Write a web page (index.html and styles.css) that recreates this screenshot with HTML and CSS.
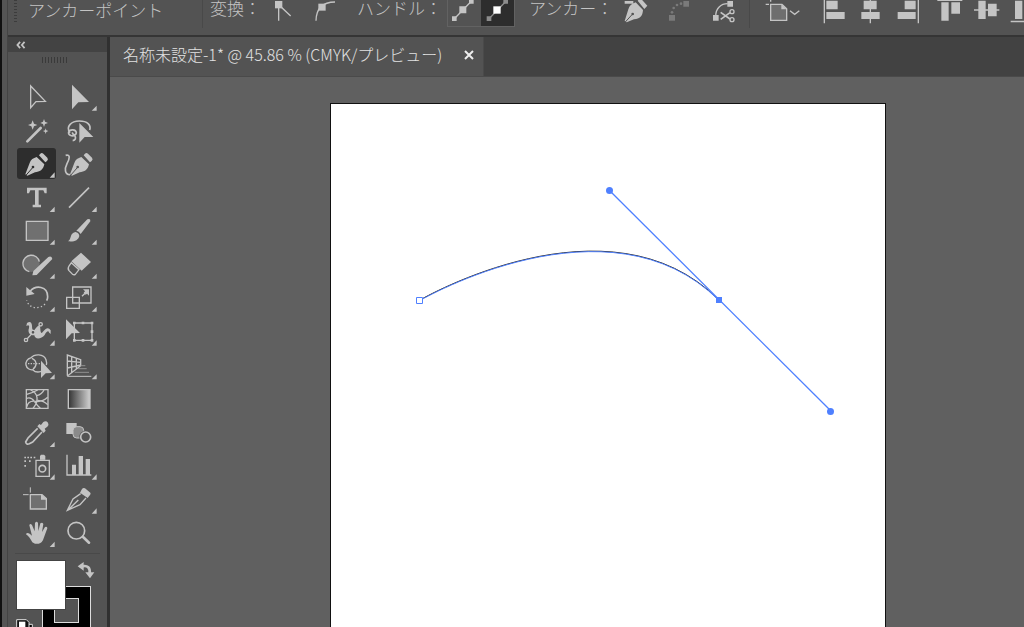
FILE: index.html
```html
<!DOCTYPE html>
<html lang="ja">
<head>
<meta charset="utf-8">
<title>名称未設定-1</title>
<link rel="stylesheet" href="styles.css">
</head>
<body>
<div class="app">
<div class="workspace">
  <header class="control-bar">
    <span class="bar-grip"></span>
    <span class="label mode">アンカーポイント</span>
    <span class="divider"></span>
    <span class="label convert">変換：</span>
    <div class="group">
      <button class="ctl" aria-label="コーナーに変換"><svg viewBox="45 0 72 105"><path class="s w4" d="M59 62V14L95 48"/><path class="f" d="M48 3h22v22H48z"/></svg></button>
      <button class="ctl" aria-label="スムーズに変換"><svg viewBox="165 0 72 105"><path class="s w4" d="M171 62C172 25 190 6 228 6"/><path class="f" d="M178 11h22v21h-22z"/></svg></button>
    </div>
    <span class="label handle">ハンドル：</span>
    <div class="segmented">
      <button class="seg" aria-label="ハンドルを表示"><svg viewBox="564 0 102 78"><path class="s w4" d="M583 56L634 4"/><path class="f" d="M576 49h14v14h-14zM598 19h21v21h-21zM627 -3h14v14h-14z"/></svg></button>
      <button class="seg on" aria-label="ハンドルを隠す"><svg viewBox="666 0 102 78"><path class="s w4 dim" d="M690 56L741 4"/><path class="fdim" d="M683 49h14v14h-14zM733 -3h14v14h-14z"/><path class="white" d="M703 19h22v22h-22z"/></svg></button>
    </div>
    <span class="label anchor">アンカー：</span>
    <div class="group">
      <button class="ctl" aria-label="アンカーを削除"><svg viewBox="342 0 72 105"><path class="f" d="M344 3h26v8h-26zM383 2L391 -6L412 17L403 27ZM377 7L399 30C398 48 390 56 372 58L350 67L344 63L355 28C358 17 366 11 377 7Z"/><path class="slit" d="M345 67L366 44"/><circle class="hole" cx="368" cy="42" r="4"/></svg></button>
      <button class="ctl" aria-label="アンカーを連結" disabled><svg viewBox="474 0 72 105"><path fill="#7a7a7a" d="M477 45h18v17h-18zM520 3h17v17h-17z"/><g fill="#7a7a7a"><circle cx="486" cy="37" r="4"/><circle cx="491" cy="24" r="4"/><circle cx="501" cy="15" r="4"/><circle cx="513" cy="11" r="4"/></g></svg></button>
      <button class="ctl" aria-label="パスをカット"><svg viewBox="606 0 72 105"><path class="s w4" d="M617 47C618 25 632 11 653 11"/><path class="f" d="M609 45h17v17h-17zM652 3h17v17h-17z"/><path class="s w5" d="M632 37L660 57M632 58L660 38"/><circle class="s w4" cx="666" cy="35" r="6"/><circle class="s w4" cx="666" cy="59" r="6"/></svg></button>
    </div>
    <span class="divider second"></span>
    <button class="ctl artboard-menu" aria-label="アートボード"><svg viewBox="15 0 108 105"><path d="M32 13H66L80 26V61H32Z" fill="#6e6e6e" stroke="#c4c4c4" stroke-width="4"/><path class="f" d="M64 12L80 28H64Z"/><path class="s w4" d="M17 13h10M32 -2v7M90 32L104 43L118 32"/></svg></button>
    <div class="group aligns">
      <button class="ctl" aria-label="左揃え"><svg viewBox="190 0 78 105"><path class="f" d="M192 0h4v70h-4zM200 2h34v26h-34zM200 36h55v21h-55z"/></svg></button>
      <button class="ctl" aria-label="左右中央揃え"><svg viewBox="301 0 78 105"><path class="f" d="M330 0h4v70h-4zM312 2h39v26h-39zM305 36h55v21h-55z"/></svg></button>
      <button class="ctl" aria-label="右揃え"><svg viewBox="412 0 78 105"><path class="f" d="M474 0h4v70h-4zM435 2h33v26h-33zM414 36h54v21h-54z"/></svg></button>
      <button class="ctl top" aria-label="上揃え"><svg viewBox="533 0 78 105"><path class="f" d="M534 -2h75v5h-75zM546 7h22v55h-22zM576 7h26v34h-26z"/></svg></button>
      <button class="ctl" aria-label="上下中央揃え"><svg viewBox="643 0 78 105"><path class="f" d="M643 28h76v4h-76zM656 2h22v55h-22zM685 11h26v38h-26z"/></svg></button>
      <button class="ctl" aria-label="下揃え"><svg viewBox="754 0 78 105"><path class="f" d="M753 62h75v5h-75zM766 2h22v55h-22zM795 20h26v37h-26z"/></svg></button>
    </div>
  </header>

  <aside class="tool-panel">
    <button class="collapse" aria-label="パネルを折りたたむ"><svg viewBox="0 0 12 9"><path class="s" stroke-width="2" d="M5 1L2 4.500L5 8M10 1L7 4.500L10 8"/></svg></button>
    <div class="panel-grip"></div>
    <div class="tools">
      <button class="tool" aria-label="ダイレクト選択"><svg viewBox="51 3 117 93"><path class="s w4" d="M92 18V83L108 65L136 64Z"/></svg></button>
      <button class="tool" aria-label="選択"><svg viewBox="177 3 117 93"><path class="f" d="M216 14V88L235 67L267 66ZM290 77V92H275Z"/></svg></button>
      <button class="tool" aria-label="自動選択"><svg viewBox="51 104 117 93"><path class="s w8 round" d="M82 183L122 143"/><path class="f" d="M98 120l4 10 10 4-10 4-4 10-4-10-10-4 10-4zM132 116l3 8 9 4-9 3-3 9-3-9-8-3 8-4zM137 144l2 6 6 2-6 3-2 6-2-6-6-3 6-2z"/></svg></button>
      <button class="tool" aria-label="なげなわ"><svg viewBox="177 104 117 93"><path class="s w5" d="M210 157C196 139 214 122 238 122C262 122 274 134 269 149M226 165C214 170 204 163 206 155C210 145 228 147 229 157C228 168 215 162 218 156M223 164C230 173 226 180 218 181"/><path class="f" d="M238 128V187L254 170L280 170Z"/></svg></button>
      <button class="tool active" aria-label="ペン" aria-pressed="true"><svg viewBox="51 204 117 93"><g id="nib"><path class="f" d="M117 226L121 221Q125 217 130 221L142 233Q146 238 141 243L136 247ZM110 231L133 253C130 269 119 276 105 277L82 287L76 283L89 249C92 239 100 234 110 231Z"/></g><path class="slit on-active" d="M77 287L97 264"/><circle class="hole on-active" cx="99" cy="261" r="4"/><path class="f" d="M164 277V293H149Z"/></svg></button>
      <button class="tool" aria-label="曲線"><svg viewBox="177 204 117 93"><use href="#nib" x="134"/><path class="slit" d="M211 287L231 264"/><circle class="hole" cx="233" cy="261" r="4"/><path class="s w5" d="M197 226C212 222 209 236 201 251C193 267 194 284 210 284"/></svg></button>
      <button class="tool" aria-label="文字"><svg viewBox="51 5 117 93"><path class="f" d="M81 22h59v17h-6l-4-9H116v43h7v8H98v-8h7V30H91l-4 9h-6zM164 79V95H149Z"/></svg></button>
      <button class="tool" aria-label="直線"><svg viewBox="177 5 117 93"><path class="s w5" d="M207 82L267 22"/><path class="f" d="M290 79V95H275Z"/></svg></button>
      <button class="tool" aria-label="長方形"><svg viewBox="51 106 117 93"><path fill="#707070" stroke="#c4c4c4" stroke-width="4" d="M79 125h65v57H79z"/><path class="f" d="M164 180V195H149Z"/></svg></button>
      <button class="tool" aria-label="ブラシ"><svg viewBox="177 106 117 93"><path class="f" d="M229 153L262 119Q272 115 271 125L242 163Q237 154 229 153ZM226 157Q237 159 238 169C235 182 223 187 204 185C216 177 208 161 226 157ZM290 180V195H275Z"/></svg></button>
      <button class="tool" aria-label="Shaper"><svg viewBox="51 207 117 93"><circle cx="94" cy="251" r="25" fill="#707070"/><path class="s w4" d="M88 275A25 25 0 1 1 118 245"/><path stroke="#535353" stroke-width="17" d="M98 288L152 234"/><path class="f" d="M97 286L100 273L145 231Q155 227 157 237L110 285ZM164 281V296H149Z"/></svg></button>
      <button class="tool" aria-label="消しゴム"><svg viewBox="177 207 117 93"><path class="f" d="M243 218L273 246L245 272L214 244ZM290 281V296H275Z"/><path class="s w4" d="M214 248L237 269L226 283Q220 287 215 280L207 272Q202 266 207 258Z"/></svg></button>
      <button class="tool" aria-label="回転"><svg viewBox="51 7 117 93"><path class="s w5" d="M91 34C107 16 143 18 143 51Q143 57 140 63"/><path class="s w4" stroke-dasharray="4 7" d="M135 73C116 92 86 85 80 62"/><path class="f" d="M79 22V48L104 43ZM164 81V96H149Z"/></svg></button>
      <button class="tool" aria-label="拡大・縮小"><svg viewBox="177 7 117 93"><path class="s w4" d="M218 22h55v48h-55zM200 53h38v33h-38zM246 50L262 34"/><path class="f" d="M249 29h18v19l-6-6-4 3-6-6 4-4zM290 81V96H275Z"/></svg></button>
      <button class="tool" aria-label="線幅"><svg viewBox="51 108 117 93"><path class="f" d="M81 129Q94 120 96 137Q96 154 104 150Q121 126 121 148Q122 164 128 156Q143 136 152 151V162Q147 159 145 154Q140 153 134 165C124 178 104 179 103 166C90 167 82 158 87 144Q90 132 79 138Z"/><path class="s w4" d="M78 180L121 134"/><circle class="node" cx="78" cy="180" r="5"/><circle class="node" cx="99" cy="157" r="6"/><circle class="node" cx="122" cy="133" r="5"/><path class="f" d="M164 181V197H149Z"/></svg></button>
      <button class="tool" aria-label="自由変形"><svg viewBox="177 108 117 93"><path class="s w4" d="M223 129h53v52h-53z"/><path class="f" d="M198 118V178L215 160L240 159ZM219 125h8v8h-8zM245 125h8v8h-8zM272 125h8v8h-8zM272 151h8v8h-8zM272 177h8v8h-8zM245 177h8v8h-8zM219 177h8v8h-8zM290 181V197H275Z"/></svg></button>
      <button class="tool" aria-label="シェイプ形成"><svg viewBox="51 209 117 93"><path class="s w4" d="M92 233A17 17 0 1 0 99 268M92 233C103 220 131 219 138 238Q141 247 139 254M98 268Q109 279 123 273M96 234Q108 240 108 250T99 266"/><path class="s w4" stroke-dasharray="4 4" d="M84 250H120"/><path class="f" d="M123 241V293L137 279L156 278ZM164 282V297H149Z"/></svg></button>
      <button class="tool" aria-label="遠近グリッド"><svg viewBox="177 209 117 93"><path class="s w4" d="M202 286V224L242 238V256L202 287M215 229V276M229 234V266M202 242L242 246M202 263L242 254"/><path stroke="#909090" stroke-width="3" d="M242 256h14M234 265h26M224 276h43"/><path class="s w3" d="M202 288h72"/><path class="f" d="M290 282V297H275Z"/></svg></button>
      <button class="tool" aria-label="メッシュ"><svg viewBox="51 9 117 93"><path class="s w4" d="M79 29h65v56H79z"/><path class="s w4" d="M80 43Q101 37 113 30M80 81Q85 61 106 64T143 52M92 30Q109 37 111 53T99 85M80 55Q93 50 103 64T121 85M110 47Q126 43 132 30M113 61Q132 62 143 74"/></svg></button>
      <button class="tool" aria-label="グラデーション"><svg viewBox="177 9 117 93"><defs><linearGradient id="ramp"><stop offset="0" stop-color="#333"/><stop offset="1" stop-color="#d0d0d0"/></linearGradient></defs><path fill="url(#ramp)" stroke="#c4c4c4" stroke-width="4" d="M205 29h65v56h-65z"/></svg></button>
      <button class="tool" aria-label="スポイト"><svg viewBox="51 110 117 93"><path class="f" d="M112 138L118 131L123 134L130 125Q138 120 144 127Q148 134 142 139L134 145L137 151L131 158ZM164 185V200H149Z"/><path class="s w5" d="M113 144L84 173L77 185Q79 194 88 190L98 185L126 155"/></svg></button>
      <button class="tool" aria-label="ブレンド"><svg viewBox="177 110 117 93"><path class="f" d="M199 128h31v33h-31z"/><rect x="219" y="139" width="32" height="34" rx="11" fill="#8a8a8a" stroke="#c4c4c4" stroke-width="3"/><circle cx="257" cy="170" r="19" fill="#535353"/><circle cx="257" cy="170" r="15" fill="#535353" stroke="#c4c4c4" stroke-width="5"/></svg></button>
      <button class="tool" aria-label="シンボルスプレー"><svg viewBox="51 211 117 93"><path class="s w4" d="M108 242h40v48h-40zM120 237h15"/><circle class="s w5" cx="127" cy="267" r="10"/><path class="f" d="M120 229l3-4h9l4 4v11h-16zM73 231h5v5h-5zM82 231h5v5h-5zM91 231h5v5h-5zM101 231h5v5h-5zM73 242h5v5h-5zM87 242h5v5h-5zM73 256h5v5h-5zM164 284V300H149Z"/></svg></button>
      <button class="tool" aria-label="棒グラフ"><svg viewBox="177 211 117 93"><path class="s w4" d="M201 225V286H274"/><path class="f" d="M216 255h12v31h-12zM236 229h13v57h-13zM257 238h13v48h-13zM290 284V300H275Z"/></svg></button>
      <button class="tool" aria-label="アートボードツール"><svg viewBox="51 12 117 93"><path fill="#707070" stroke="#c4c4c4" stroke-width="4" d="M91 44H126L139 56V87H91Z"/><path class="f" d="M123 42L141 59H123Z"/><path class="s w3" d="M69 44h17M91 22v16"/></svg></button>
      <button class="tool" aria-label="スライス"><svg viewBox="177 12 117 93"><path class="f" d="M246 27Q250 22 255 25L271 38Q273 41 270 45L263 54L240 38ZM290 85V101H275Z"/><path class="s w4" d="M242 41L219 57L202 91L240 74L258 54M203 91L235 60"/></svg></button>
      <button class="tool" aria-label="手のひら"><svg viewBox="51 112 117 93"><path class="f" d="M97 188C91 177 86 170 78 164Q80 157 89 162L96 168L88 137Q90 130 96 136L104 155L105 130Q110 123 114 130L115 154L121 131Q127 126 130 133L126 157L135 142Q142 139 142 146L131 176Q127 191 116 192H105ZM164 186V202H149Z"/></svg></button>
      <button class="tool" aria-label="ズーム"><svg viewBox="177 112 117 93"><circle class="s w5" cx="229" cy="153" r="25"/><path class="s w8 round" d="M250 173L267 189"/></svg></button>
    </div>
    <div class="swatches">
      <button class="stroke-color" aria-label="線"><span></span></button>
      <button class="fill-color" aria-label="塗り"></button>
      <button class="swap" aria-label="塗りと線を入れ替え"><svg viewBox="231 240 54 54"><path class="s" stroke-width="8" d="M246 256C263 252 271 260 269 277"/><path class="f" d="M251 243V269L233 256ZM256 274H283L270 292Z"/></svg></button>
      <button class="defaults" aria-label="初期設定の塗りと線"><svg viewBox="45 411 60 60"><path d="M66 430H97V459H66Z" fill="#000" stroke="#ddd" stroke-width="3"/><path d="M50 416H79L87 424V450H50Z" fill="#111" stroke="#ddd" stroke-width="3"/><path class="white" d="M57 422H76V446H57Z"/></svg></button>
    </div>
  </aside>

  <main class="document">
    <div class="tabs">
      <div class="tab"><span class="tab-title">名称未設定-1* @ 45.86 % (CMYK/プレビュー)</span><button class="close" aria-label="閉じる"><svg viewBox="0 0 10 10"><path stroke="#eee" stroke-width="2" d="M1 1L9 9M9 1L1 9"/></svg></button></div>
    </div>
    <div class="canvas">
      <div class="artboard">
        <svg class="drawing" viewBox="331 104 520 330" width="520" height="330">
          <path d="M420 300C420 300 609 190 719 300" fill="none" stroke="#222"/>
          <path d="M420 300.500C420 300.500 609 190.500 719 300.500" fill="none" stroke="#4f80ff"/>
          <line class="direction" x1="609" y1="190" x2="831" y2="411"/>
          <circle cx="609.500" cy="190.500" r="3.500" fill="#4f80ff"/>
          <circle cx="830.500" cy="411.500" r="3.500" fill="#4f80ff"/>
          <path fill="#4f80ff" d="M716 297h6v6h-6z"/>
          <path fill="#fff" stroke="#4f80ff" d="M416.500 297.500h6v6h-6z"/>
        </svg>
      </div>
    </div>
  </main>
</div>
</div>
</body>
</html>
```

FILE: styles.css
```css
* { box-sizing: border-box; }
body {
  margin: 0;
  background: #606060;
  color: #c4c4c4;
  font-family: "Noto Sans CJK JP", sans-serif;
  font-size: 17px;
  font-weight: 300;
}
button {
  display: block;
  margin: 0;
  padding: 0;
  border: 0;
  background: none;
  color: inherit;
  font: inherit;
}
svg { display: block; overflow: visible; }
.s { fill: none; stroke: #c4c4c4; }
.w3 { stroke-width: 3; }
.w4 { stroke-width: 4; }
.w5 { stroke-width: 5; }
.w8 { stroke-width: 8; }
.dim { stroke: #8c8c8c; }
.round { stroke-linecap: round; }
.f { fill: #c4c4c4; }
.fdim { fill: #8c8c8c; }
.white { fill: #fff; }
.node { fill: #535353; stroke: #c4c4c4; stroke-width: 4; }
.slit { fill: none; stroke: #535353; stroke-width: 3; }
.hole { fill: #535353; }
.slit.on-active { stroke: #2d2d2d; }
.hole.on-active { fill: #2d2d2d; }
.direction { stroke: #4f80ff; stroke-width: 1.3; }

.app {
  height: 100vh;
  overflow: hidden;
  border-left: 2px solid #111;
  padding-left: 5px;
  background: #555;
}
.workspace {
  display: grid;
  grid-template: 37px 1fr / 102px 1fr;
  height: 100%;
  border-left: 1px solid #444;
}

/* Control bar */
.control-bar {
  grid-column: 1 / -1;
  display: flex;
  min-width: 0;
  overflow: hidden;
  background: #535353;
  border-bottom: 2px solid #353535;
}
.bar-grip {
  flex: none;
  width: 3px;
  height: 24px;
  margin-left: 6px;
  background: repeating-linear-gradient(#3c3c3c 0 1px, #535353 1px 3px);
}
.label {
  flex: none;
  font-family: "Liberation Sans", "Noto Sans CJK JP", sans-serif;
  line-height: 20px;
  white-space: nowrap;
}
.mode { width: 185px; padding: 2px 0 0 11px; }
.divider { flex: none; width: 1px; height: 28px; background: #494949; }
.second { margin-left: 13px; }
.convert { width: 71px; padding-left: 7px; }
.handle { width: 110px; padding-left: 19px; }
.anchor { width: 109px; padding-left: 14px; }
.group { display: flex; flex: none; gap: 20px; }
.ctl { flex: none; width: 24px; height: 35px; }
.ctl svg { width: 100%; height: 35px; }
.convert + .group { gap: 16px; }
.segmented {
  display: flex;
  flex: none;
  height: 27px;
  margin-left: -1px;
  border: 1px solid #626262;
  border-top: 0;
}
.seg { width: 33px; height: 26px; }
.seg svg { width: 34px; height: 26px; }
.on { background: #2d2d2d; }
.artboard-menu { width: 36px; margin-left: 15px; }
.aligns { gap: 11px; margin-left: 22px; }
.aligns .ctl { width: 26px; }
.aligns .top { margin-left: 3px; }

/* Tool panel */
.tool-panel {
  min-height: 0;
  background: #535353;
  border-right: 3px solid #303030;
}
.collapse {
  width: 100%;
  height: 15px;
  padding: 2px 7px;
  background: #434343;
}
.collapse svg { width: 12px; height: 8px; }
.panel-grip {
  width: 27px;
  height: 6px;
  margin: 5px 0 18px 34px;
  background: repeating-linear-gradient(90deg, #3a3a3a 0 1px, #535353 1px 3px);
}
.tools {
  display: grid;
  grid-template-columns: 39px 39px;
  grid-template-rows: repeat(14, 1fr);
  gap: 3px;
  height: 467px;
  margin-left: 9px;
}
.tool { min-height: 0; border-radius: 3px; }
.tool svg { width: 39px; height: 31px; }
.active { background: #2d2d2d; }
.swatches {
  position: relative;
  height: 74px;
  margin: 5px 7px 0;
  border-top: 1px solid #494949;
}
.fill-color, .stroke-color, .swap, .defaults { position: absolute; }
.fill-color {
  left: 1px;
  top: 6px;
  width: 50px;
  height: 50px;
  background: #fff;
  border: 1px solid #444;
}
.stroke-color {
  left: 27px;
  top: 32px;
  width: 49px;
  height: 49px;
  padding: 11px;
  background: #000;
  border: 1px solid #ddd;
}
.stroke-color span {
  display: block;
  height: 25px;
  background: #535353;
  border: 1px solid #ddd;
}
.swap { left: 62px; top: 7px; width: 18px; height: 18px; }
.defaults { left: 0; top: 64px; width: 20px; height: 20px; }

/* Document window */
.document {
  display: flex;
  flex-direction: column;
  min-width: 0;
  min-height: 0;
}
.tabs { display: flex; height: 40px; background: #424242; border-bottom: 1px solid #4a4a4a; }
.tab {
  display: flex;
  align-items: center;
  gap: 22px;
  padding: 0 9px 3px 13px;
  background: #535353;
  border-right: 1px solid #4a4a4a;
}
.tab-title {
  padding-bottom: 3px;
  color: #e2e2e2;
  font-size: 16px;
  white-space: nowrap;
}
.close { width: 10px; height: 10px; }
.canvas { display: flex; flex: 1; min-height: 0; padding: 26px 138px 0 220px; background: #606060; }
.artboard {
  flex: 1;
  min-width: 0;
  background: #fff;
  border: 1px solid #111;
  border-bottom: 0;
}
```
